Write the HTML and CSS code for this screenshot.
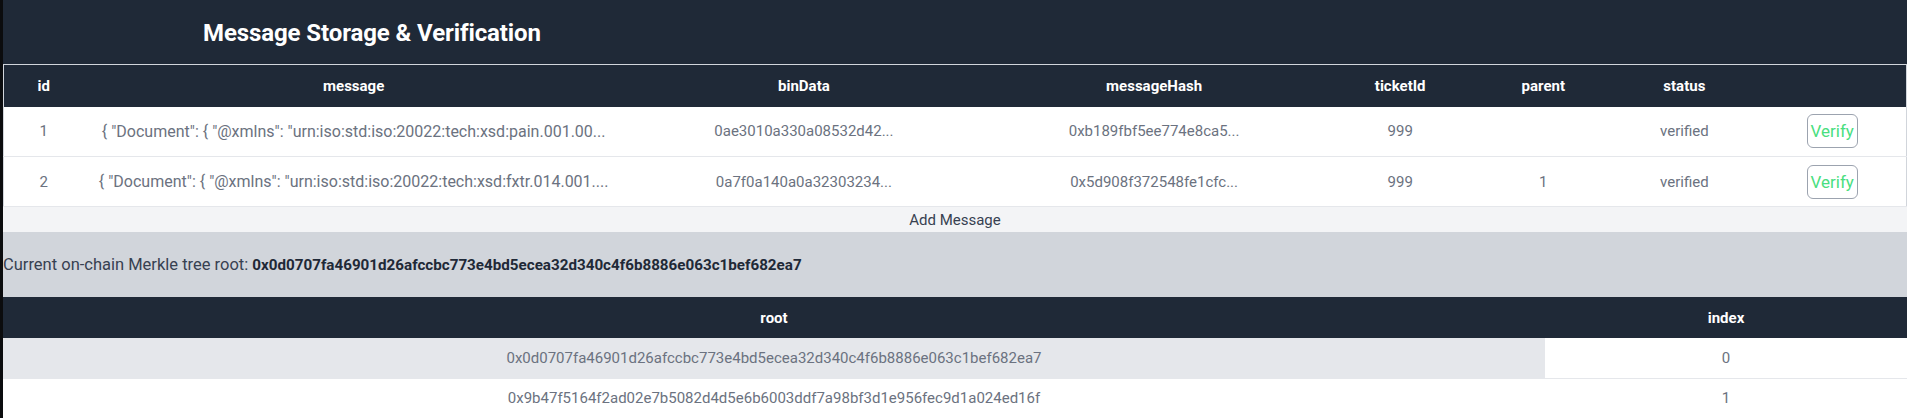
FILE: index.html
```html
<!DOCTYPE html>
<html lang="en">
<head>
<meta charset="utf-8">
<title>Message Storage &amp; Verification</title>
<link rel="stylesheet" href="styles.css">
</head>
<body>
<div class="page">
  <header class="topbar">
    <h1 class="title">Message Storage &amp; Verification</h1>
  </header>

  <table class="msg-table">
    <colgroup>
      <col class="c-id">
      <col class="c-msg">
      <col class="c-bin">
      <col class="c-hash">
      <col class="c-ticket">
      <col class="c-parent">
      <col class="c-status">
      <col class="c-action">
    </colgroup>
    <thead>
      <tr>
        <th>id</th>
        <th>message</th>
        <th>binData</th>
        <th>messageHash</th>
        <th>ticketId</th>
        <th>parent</th>
        <th>status</th>
        <th></th>
      </tr>
    </thead>
    <tbody>
      <tr>
        <td>1</td>
        <td class="msg">{ "Document": { "@xmlns": "urn:iso:std:iso:20022:tech:xsd:pain.001.00...</td>
        <td>0ae3010a330a08532d42...</td>
        <td>0xb189fbf5ee774e8ca5...</td>
        <td>999</td>
        <td></td>
        <td>verified</td>
        <td><button class="verify-btn">Verify</button></td>
      </tr>
      <tr>
        <td>2</td>
        <td class="msg">{ "Document": { "@xmlns": "urn:iso:std:iso:20022:tech:xsd:fxtr.014.001....</td>
        <td>0a7f0a140a0a32303234...</td>
        <td>0x5d908f372548fe1cfc...</td>
        <td>999</td>
        <td>1</td>
        <td>verified</td>
        <td><button class="verify-btn">Verify</button></td>
      </tr>
    </tbody>
  </table>

  <button class="add-btn">Add Message</button>

  <div class="root-info">Current on-chain Merkle tree root: <strong>0x0d0707fa46901d26afccbc773e4bd5ecea32d340c4f6b8886e063c1bef682ea7</strong></div>

  <table class="root-table">
    <colgroup>
      <col class="c-root">
      <col class="c-index">
    </colgroup>
    <thead>
      <tr>
        <th>root</th>
        <th>index</th>
      </tr>
    </thead>
    <tbody>
      <tr class="hovered">
        <td class="hl">0x0d0707fa46901d26afccbc773e4bd5ecea32d340c4f6b8886e063c1bef682ea7</td>
        <td>0</td>
      </tr>
      <tr>
        <td>0x9b47f5164f2ad02e7b5082d4d5e6b6003ddf7a98bf3d1e956fec9d1a024ed16f</td>
        <td>1</td>
      </tr>
    </tbody>
  </table>
</div>
</body>
</html>
```

FILE: styles.css
```css
* { box-sizing: border-box; }

html, body {
  margin: 0;
  padding: 0;
  background: #1f2937;
}

body {
  font-family: Roboto, "Noto Sans", Arial, sans-serif;
  font-size: 15px;
  color: #6b7280;
}

.page {
  border-left: 3px solid #0b0c0e;
  min-height: 418px;
  background: #ffffff;
}

.topbar {
  height: 64px;
  background: #1f2937;
  display: flex;
  align-items: center;
  padding: 2px 0 0 200px;
}

.title {
  margin: 0;
  font-size: 24px;
  font-weight: 700;
  color: #ffffff;
  letter-spacing: -0.1px;
}

table {
  width: 100%;
  border-collapse: collapse;
  table-layout: fixed;
}

.msg-table {
  border: 1px solid #d1d5db;
}

.c-id { width: 80px; }
.c-msg { width: 540px; }
.c-bin { width: 360px; }
.c-hash { width: 340px; }
.c-ticket { width: 152px; }
.c-parent { width: 134px; }
.c-status { width: 148px; }
.c-action { width: 148px; }

th {
  background: #1f2937;
  color: #ffffff;
  font-weight: 700;
  text-align: center;
  padding: 0 8px;
  white-space: nowrap;
}

td {
  text-align: center;
  padding: 0 8px;
  white-space: nowrap;
  overflow: hidden;
  color: #6b7280;
}

td.msg { font-size: 16px; }

.msg-table th { height: 42px; }
.msg-table td { height: 50px; }
.msg-table tbody tr { border-bottom: 1px solid #e5e7eb; }

.verify-btn {
  font-family: inherit;
  font-size: 17px;
  color: #4ade80;
  background: #ffffff;
  border: 1px solid #9ca3af;
  border-radius: 6px;
  height: 34px;
  padding: 0 3px;
  cursor: pointer;
}

.add-btn {
  display: block;
  width: 100%;
  height: 25px;
  border: 0;
  margin: 0;
  background: #f3f4f6;
  color: #374151;
  font-family: inherit;
  font-size: 15px;
  padding: 0;
  cursor: pointer;
}

.root-info {
  height: 65px;
  background: #d1d5db;
  color: #374151;
  font-size: 16.5px;
  display: flex;
  align-items: center;
  white-space: pre;
}

.root-info strong {
  color: #1f2937;
  font-weight: 700;
  font-size: 15.2px;
}

.c-root { width: 1542px; }
.c-index { width: auto; }

.root-table th { height: 41px; }
.root-table td { height: 40px; }
.root-table tbody tr { border-bottom: 1px solid #e5e7eb; }
.root-table td.hl { background: #e5e7eb; }
```
